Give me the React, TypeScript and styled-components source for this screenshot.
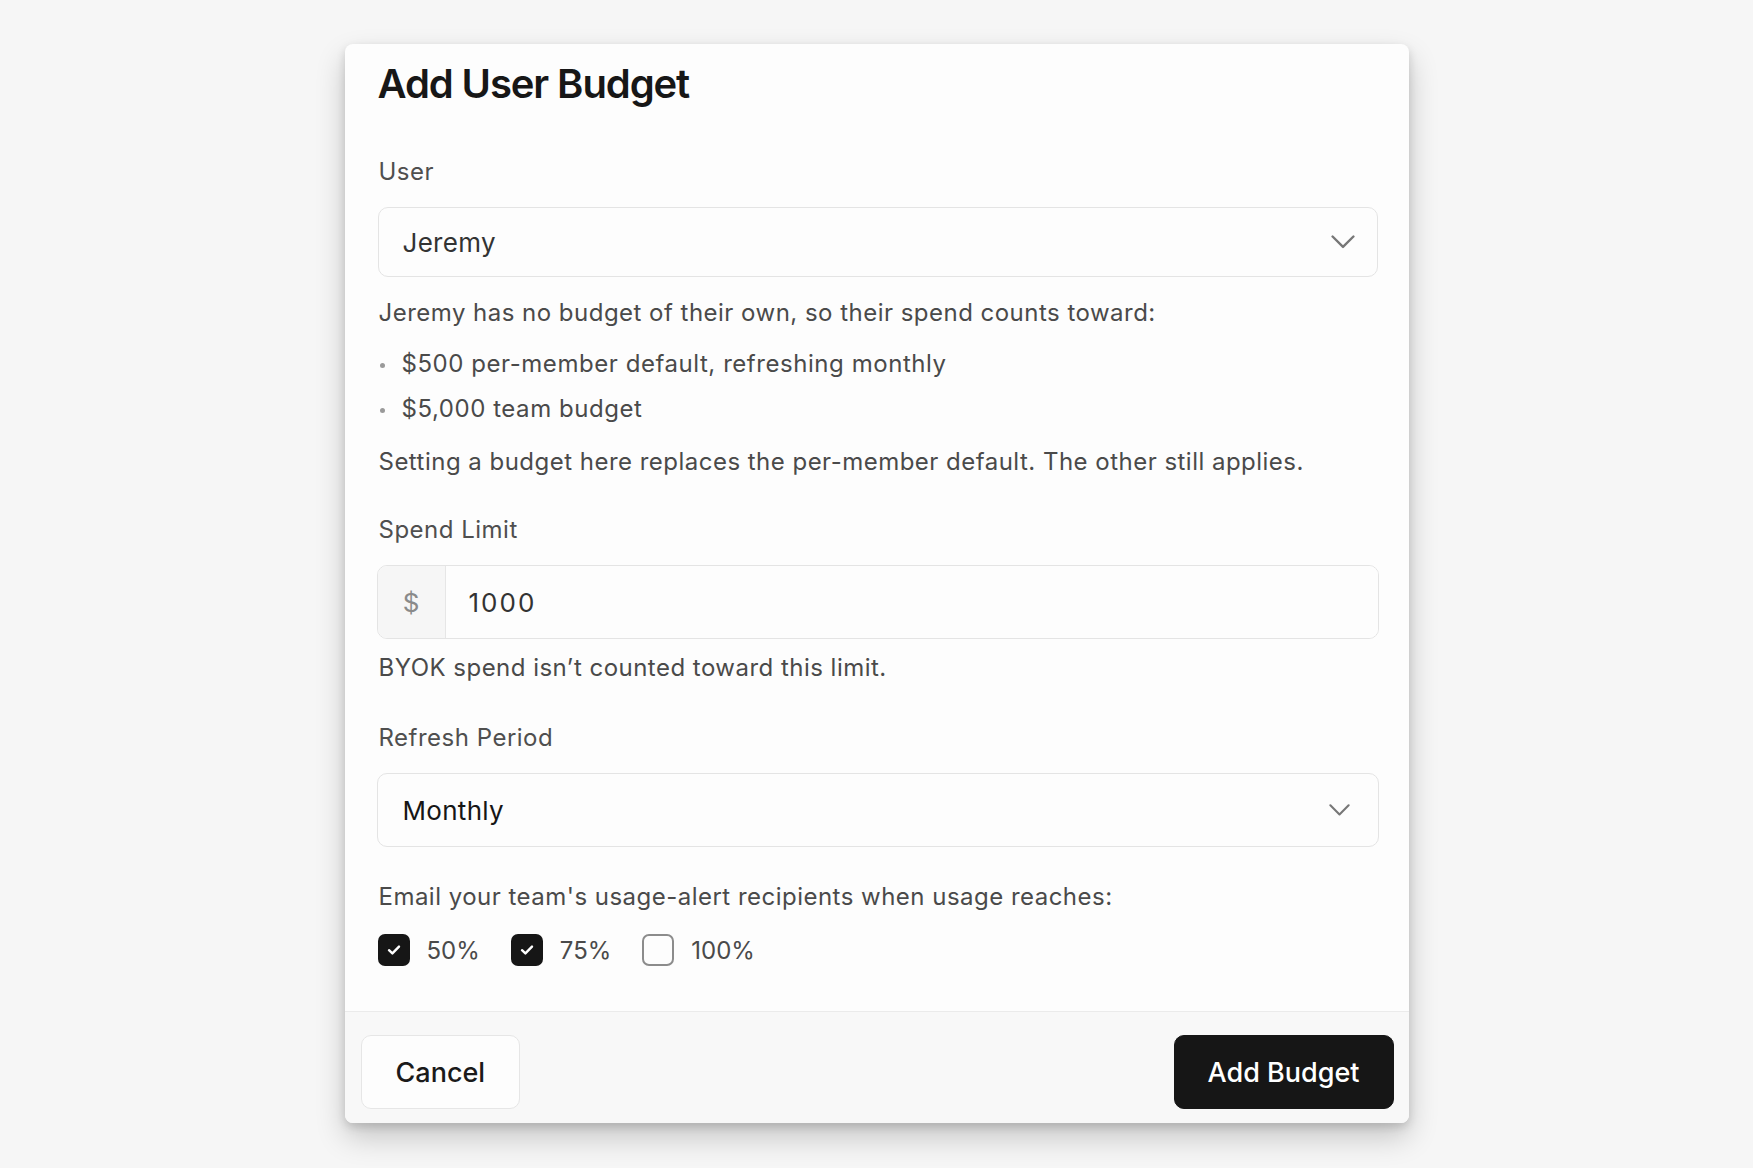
import React from "react";
import styled, { createGlobalStyle } from "styled-components";

const GlobalStyle = createGlobalStyle`
    html, body {
        margin: 0;
        padding: 0;
        background: #f6f6f6;
        font-family: Inter, "Noto Sans", sans-serif;
        -webkit-font-smoothing: antialiased;
    }
`;

const Page = styled.div`
    min-height: 1168px;
    padding-top: 44px;
    box-sizing: border-box;
    display: flex;
    justify-content: center;
    align-items: flex-start;
`;

const Dialog = styled.div`
    width: 1064px;
    background: #fdfdfd;
    border-radius: 8px;
    overflow: hidden;
    box-shadow: 0 14px 30px rgba(0, 0, 0, 0.2), 0 4px 10px rgba(0, 0, 0, 0.14);
`;

const Body = styled.div`
    padding: 16px 31px 45px 33px;
    display: flex;
    flex-direction: column;
`;

const Title = styled.h2`
    margin: 0 0 48px 0;
    font-size: 40px;
    line-height: 48px;
    font-weight: 600;
    color: #171717;
    letter-spacing: -1.1px;
`;

type GapProps = { $top?: number };

const Label = styled.div<GapProps>`
    margin: ${(p) => p.$top ?? 0}px 0 19px 1px;
    font-size: 24px;
    line-height: 32px;
    letter-spacing: 0.5px;
    color: #4f4f4f;
`;

const Text = styled.p<GapProps>`
    margin: ${(p) => p.$top ?? 0}px 0 0 1px;
    font-size: 24px;
    line-height: 32px;
    letter-spacing: 0.48px;
    color: #4a4a4a;
`;

const Select = styled.div<{ $height: number; $dark?: boolean; $bleed?: boolean }>`
    height: ${(p) => p.$height}px;
    box-sizing: border-box;
    margin: 0 ${(p) => (p.$bleed ? -1 : 0)}px;
    border: 1px solid #e4e4e4;
    border-radius: 10px;
    background: #fdfdfd;
    display: flex;
    align-items: center;
    justify-content: space-between;
    padding: 0 ${(p) => (p.$bleed ? 28 : 22)}px 0 ${(p) => (p.$bleed ? 25 : 24)}px;
    font-size: 26px;
    letter-spacing: 0.3px;
    color: ${(p) => (p.$dark ? "#161616" : "#333333")};
`;

const List = styled.ul`
    list-style: none;
    margin: 19px 0 0 1px;
    padding: 0;
    display: flex;
    flex-direction: column;
    gap: 13px;
`;

const Item = styled.li`
    position: relative;
    padding-left: 23px;
    font-size: 24px;
    line-height: 32px;
    letter-spacing: 0.55px;
    color: #4a4a4a;

    &::before {
        content: "";
        position: absolute;
        left: 1px;
        top: 15px;
        width: 5px;
        height: 5px;
        border-radius: 50%;
        background: #9a9a9a;
    }
`;

const InputGroup = styled.div`
    height: 74px;
    box-sizing: border-box;
    border: 1px solid #e4e4e4;
    border-radius: 10px;
    display: flex;
    overflow: hidden;
    margin: 0 -1px;
`;

const Prefix = styled.div`
    width: 67px;
    background: #f6f6f6;
    border-right: 1px solid #e6e6e6;
    display: flex;
    align-items: center;
    justify-content: center;
    font-size: 26px;
    color: #8a8a8a;
`;

const InputValue = styled.div`
    flex: 1;
    display: flex;
    align-items: center;
    padding-left: 23px;
    font-size: 26px;
    letter-spacing: 2px;
    color: #333333;
    background: #fdfdfd;
`;

const Checks = styled.div`
    margin-top: 21px;
    display: flex;
    align-items: center;
    gap: 31px;
`;

const CheckOption = styled.label`
    display: flex;
    align-items: center;
    gap: 17px;
    font-size: 24px;
    color: #4a4a4a;
`;

const Box = styled.span<{ $checked: boolean }>`
    width: 32px;
    height: 32px;
    box-sizing: border-box;
    border-radius: 7px;
    display: flex;
    align-items: center;
    justify-content: center;
    background: ${(p) => (p.$checked ? "#161616" : "#fdfdfd")};
    border: ${(p) => (p.$checked ? "none" : "2px solid #8c8c8c")};
`;

const Footer = styled.div`
    border-top: 1px solid #ebebeb;
    background: #f8f8f8;
    padding: 23px 15px 14px 16px;
    display: flex;
    justify-content: space-between;
`;

const Button = styled.button<{ $primary?: boolean }>`
    height: 74px;
    box-sizing: border-box;
    padding: 0 ${(p) => (p.$primary ? 33 : 34)}px;
    border-radius: 10px;
    font-family: inherit;
    font-size: 27px;
    font-weight: 500;
    cursor: pointer;
    color: ${(p) => (p.$primary ? "#ffffff" : "#1a1a1a")};
    background: ${(p) => (p.$primary ? "#161616" : "#fdfdfd")};
    border: 1px solid ${(p) => (p.$primary ? "#161616" : "#e6e6e6")};
`;

function Chevron({ width = 24 }: { width?: number }) {
    return (
        <svg width={width} height={width * 0.58} viewBox="0 0 24 14" fill="none">
            <path
                d="M1.5 1.5 L12 12 L22.5 1.5"
                stroke="#777777"
                strokeWidth="2.4"
                strokeLinecap="round"
                strokeLinejoin="round"
            />
        </svg>
    );
}

function Check({ label, checked }: { label: string; checked: boolean }) {
    return (
        <CheckOption>
            <Box $checked={checked}>
                {checked && (
                    <svg width="14" height="12" viewBox="0 0 14 12" fill="none">
                        <path
                            d="M2 6.2 L5.4 9.4 L12 2.6"
                            stroke="#ffffff"
                            strokeWidth="2.4"
                            strokeLinecap="round"
                            strokeLinejoin="round"
                        />
                    </svg>
                )}
            </Box>
            {label}
        </CheckOption>
    );
}

export default function App() {
    const thresholds = [
        { label: "50%", checked: true },
        { label: "75%", checked: true },
        { label: "100%", checked: false },
    ];

    return (
        <Page>
            <GlobalStyle />
            <Dialog>
                <Body>
                    <Title>Add User Budget</Title>

                    <Label>User</Label>
                    <Select $height={70}>
                        Jeremy
                        <Chevron />
                    </Select>
                    <Text $top={20}>
                        Jeremy has no budget of their own, so their spend counts toward:
                    </Text>
                    <List>
                        <Item>$500 per-member default, refreshing monthly</Item>
                        <Item>$5,000 team budget</Item>
                    </List>
                    <Text $top={21}>
                        Setting a budget here replaces the per-member default. The other still applies.
                    </Text>

                    <Label $top={36}>Spend Limit</Label>
                    <InputGroup>
                        <Prefix>$</Prefix>
                        <InputValue>1000</InputValue>
                    </InputGroup>
                    <Text $top={13}>BYOK spend isn’t counted toward this limit.</Text>

                    <Label $top={38}>Refresh Period</Label>
                    <Select $height={74} $dark $bleed>
                        Monthly
                        <Chevron width={21} />
                    </Select>

                    <Text $top={34}>
                        Email your team's usage-alert recipients when usage reaches:
                    </Text>
                    <Checks>
                        {thresholds.map((t) => (
                            <Check key={t.label} label={t.label} checked={t.checked} />
                        ))}
                    </Checks>
                </Body>
                <Footer>
                    <Button>Cancel</Button>
                    <Button $primary>Add Budget</Button>
                </Footer>
            </Dialog>
        </Page>
    );
}
